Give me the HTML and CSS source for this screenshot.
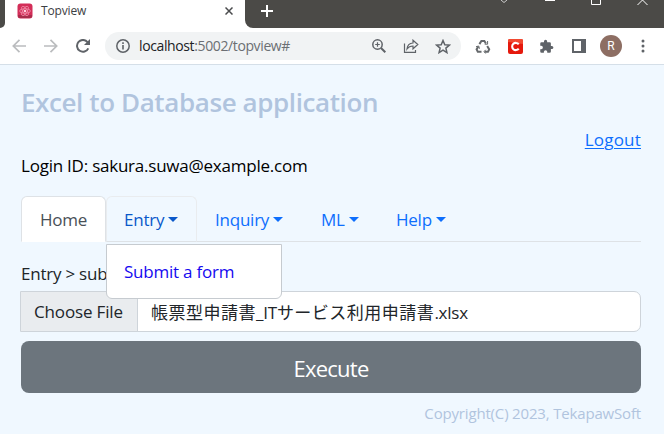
FILE: index.html
```html
<!DOCTYPE html>
<html lang="en">
<head>
<meta charset="utf-8">
<title>Topview</title>
<link rel="stylesheet" href="styles.css">
</head>
<body>
<header class="browser">
  <div class="strip">
    <div class="corner-left"></div>
    <div class="tab">
      <svg class="favicon" width="16" height="16" viewBox="0 0 16 16"><rect x=".5" y=".5" width="15" height="15" rx="3" fill="#d32d58"/><path d="M1 12h14v1q0 2-2 2H3q-2 0-2-2z" fill="#a92c4b"/><g fill="none" stroke="#f08ea8" stroke-width=".8"><ellipse cx="8" cy="8" rx="5.3" ry="2.2"/><ellipse cx="8" cy="8" rx="5.3" ry="2.2" transform="rotate(60 8 8)"/><ellipse cx="8" cy="8" rx="5.3" ry="2.2" transform="rotate(120 8 8)"/></g><circle cx="8" cy="8" r="1.2" fill="#ffd3df"/></svg>
      <span class="tab-title">Topview</span>
      <svg class="close" width="8" height="8" viewBox="0 0 8 8"><path d="M.5.5l7 7M7.5.5l-7 7" stroke="#4a4b4d" stroke-width="1.5"/></svg>
    </div>
    <div class="strip-rest">
      <svg class="plus" width="12" height="12" viewBox="0 0 12 12"><path d="M6 0v12M0 6h12" stroke="#fff" stroke-width="2"/></svg>
      <svg class="window-icons" width="160" height="6" viewBox="0 0 160 6" fill="none" stroke="#fff"><path d="M13 0l3 2.500L19 0" stroke="#ccc"/><path d="M57 .5h10"/><path d="M103.500 0v4.500h9V0"/><path d="M149.500 5l5-5 5 5"/></svg>
    </div>
  </div>
  <div class="toolbar">
    <svg class="arrow" width="14" height="14" viewBox="0 0 14 14" fill="none" stroke="#babcbe" stroke-width="1.700"><path d="M14 7H1M7.500 .8L1.300 7l6.200 6.200"/></svg>
    <svg class="arrow forward" width="14" height="14" viewBox="0 0 14 14" fill="none" stroke="#babcbe" stroke-width="1.700"><path d="M0 7h13M6.500 .8L12.700 7l-6.200 6.200"/></svg>
    <svg class="reload" width="14" height="14" viewBox="0 0 14 14"><path d="M12.300 9.300A5.900 5.900 0 1 1 11.500 3.100" fill="none" stroke="#5f6368" stroke-width="2"/><path d="M14 0v6H8z" fill="#5f6368"/></svg>
    <div class="address">
      <svg class="info" width="14" height="14" viewBox="0 0 14 14"><circle cx="7" cy="7" r="6.200" fill="none" stroke="#5f6368" stroke-width="1.500"/><path d="M7 6v4.500M7 3.300v1.600" stroke="#5f6368" stroke-width="1.600"/></svg>
      <span class="url"><b>localhost</b>:5002/topview#</span>
      <svg width="14" height="14" viewBox="0 0 14 14" fill="none" stroke="#5f6368" stroke-width="1.500"><circle cx="5.500" cy="5.500" r="4.700"/><path d="M9 9l4.300 4.300" stroke-width="2"/><path d="M5.500 3.200v4.600M3.200 5.500h4.600" stroke-width="1.200"/></svg>
      <svg class="share" width="16" height="14" viewBox="0 0 16 14" fill="none" stroke="#5f6368" stroke-width="1.200"><path d="M1.500 4.500v8.900h11V11"/><path d="M4 10c.4-4 2.800-5.800 6-6V1.200l4.800 4.300L10 9.800V7C7.300 7 5.400 8 4 10z"/></svg>
      <svg class="star" width="16" height="15" viewBox="0 0 16 15"><path d="M8 1.500l1.800 4.200 4.600.4-3.500 3 1 4.500L8 11.200l-3.900 2.400 1-4.500-3.500-3 4.600-.4z" fill="none" stroke="#5f6368" stroke-width="1.500"/></svg>
    </div>
    <svg class="recycle" width="16" height="15" viewBox="0 0 16 15" fill="none" stroke="#66696c" stroke-width="2"><path d="M4.400 5.100L6.400 1.900h3l1.500 2.500"/><path d="M12.200 7l2 3.400-1.200 2.300H9.600"/><path d="M6.500 12.700H2.800L1.600 10.400l1.700-2.900"/><path d="M12.600 2v3.200H9.700M10.700 10.800L9 12.700l1.700 1.800M1 7.700l2.700-.7.8 2.700" stroke-width="1"/></svg>
    <svg class="red" width="15" height="15" viewBox="0 0 15 15"><rect width="15" height="15" rx="2" fill="#e5190d"/><path d="M1 0h13q1 0 1 2v3L0 3V1z" fill="#f14a32"/><path d="M10.700 5.400A3.600 3.600 0 1 0 10.700 9.600" fill="none" stroke="#fff" stroke-width="2.100"/></svg>
    <svg class="puzzle" width="15" height="15" viewBox="0 0 24 24"><path fill="#5f6368" d="M20.500 11H19V7a2 2 0 0 0-2-2h-4V3.500a2.500 2.500 0 0 0-5 0V5H4a2 2 0 0 0-2 2v3.800h1.500a2.700 2.700 0 0 1 0 5.400H2V20a2 2 0 0 0 2 2h3.800v-1.500a2.700 2.700 0 0 1 5.400 0V22H17a2 2 0 0 0 2-2v-4h1.500a2.500 2.500 0 0 0 0-5z"/></svg>
    <svg class="panel" width="14" height="14" viewBox="0 0 14 14"><path fill="#5f6368" fill-rule="evenodd" d="M0 0h14v14H0zM2 2v10h7V2z"/></svg>
    <span class="avatar">R</span>
    <svg class="dots" width="4" height="14" viewBox="0 0 4 14" fill="#5f6368"><circle cx="2" cy="2" r="1.500"/><circle cx="2" cy="7" r="1.500"/><circle cx="2" cy="12" r="1.500"/></svg>
  </div>
</header>
<main class="page">
  <h1 class="title">Excel to Database application</h1>
  <div class="logout-row"><a class="logout" href="#">Logout</a></div>
  <div class="login">Login ID: sakura.suwa@example.com</div>
  <nav class="tabs">
    <a class="item active">Home</a>
    <div class="item hover">Entry<i class="caret"></i>
      <div class="menu"><a class="submit">Submit a form</a></div>
    </div>
    <a class="item inquiry">Inquiry<i class="caret"></i></a>
    <a class="item ml">ML<i class="caret"></i></a>
    <a class="item">Help<i class="caret"></i></a>
  </nav>
  <div class="crumbs">Entry &gt; sub</div>
  <div class="file">
    <span class="choose">Choose File</span>
    <span class="name"><span class="cjk">帳票型申請書</span>_IT<span class="cjk">サービス利用申請書</span>.xlsx</span>
  </div>
  <button class="execute">Execute</button>
  <footer class="footer">Copyright(C) 2023, TekapawSoft</footer>
</main>
</body>
</html>
```

FILE: styles.css
```css
* { box-sizing: border-box; }
body {
  margin: 0;
  width: 664px;
  height: 434px;
  overflow: hidden;
  background: #f0f8ff;
  font: 17px/26px "Open Sans", "Noto Sans CJK JP", sans-serif;
  letter-spacing: -0.23px;
  color: #212529;
}
svg { display: block; flex: none; }

.browser { height: 65px; background: #fff; border-bottom: 1px solid #d5dfe8; }
.strip { display: flex; height: 28px; background: #fff; }
.corner-left { width: 5px; background: #4b4a47; border-bottom-right-radius: 5px; }
.tab { display: flex; width: 240px; padding: 3px 12px 0 12px; }
.tab-title { margin-left: 8px; font-size: 12px; line-height: 16px; letter-spacing: -0.15px; color: #3c4043; }
.close { margin: 4px 0 0 auto; }
.strip-rest { flex: 1; display: flex; justify-content: space-between; padding: 0 16px; background: #4b4a47; border-bottom-left-radius: 8px; }
.plus { margin-top: 5px; }
.toolbar { display: flex; align-items: center; height: 36px; padding-left: 12px; }
.forward { margin-left: 18px; }
.reload { margin-left: 18px; }
.address { display: flex; align-items: center; margin-left: 15px; width: 356px; height: 28px; padding: 0 10px 0 11px; border-radius: 14px; background: #f1f3f4; }
.url { margin: 0 auto 0 9px; font-size: 14px; letter-spacing: -0.38px; color: #6b6f73; }
.url b { font-weight: 400; color: #202124; }
.share { margin-left: 17px; }
.star { margin-left: 16px; }
.recycle { margin-left: 14px; }
.red { margin-left: 17px; }
.puzzle { margin-left: 16px; }
.panel { margin-left: 18px; }
.avatar { width: 22px; height: 22px; margin-left: 14px; border-radius: 50%; background: #8d6e63; color: #fff; font: 12px/22px Roboto, sans-serif; letter-spacing: 0; text-align: center; }
.dots { margin-left: 19px; }

.page { padding: 19px 23px 0 21px; }
.title { margin: 0; font-size: 26px; line-height: 36px; font-weight: 600; letter-spacing: -0.4px; color: #b0c4de; }
.logout-row { margin-top: 7px; text-align: right; }
.logout { color: #0d6efd; letter-spacing: 0.2px; text-underline-offset: 2px; text-decoration-thickness: 1px; }
.login { color: #000; }
.tabs { display: flex; height: 46px; margin-top: 17px; border-bottom: 1px solid #dee2e6; color: #0d6efd; }
.item { position: relative; display: flex; align-items: center; height: 46px; padding: 1px 17px 0; border: 1px solid transparent; border-radius: 6px 6px 0 0; }
.active { width: 85px; padding-left: 18px; background: #fff; border-color: #dee2e6 #dee2e6 #fff; color: #495057; }
.hover { width: 91px; border-color: #e9ecef #e9ecef #dee2e6; color: #0a58ca; }
.inquiry { width: 106px; }
.ml { width: 75px; }
.caret { margin-left: 4px; border: 5px solid transparent; border-top-color: currentColor; border-bottom: 0; }
.menu { position: absolute; left: -1px; top: 47px; width: 176px; height: 55px; padding: 14px 17px; background: #fff; border: 1px solid #c6cbd0; border-radius: 0 0 6px 6px; }
.submit { color: #1509f0; }
.crumbs { margin-top: 19px; }
.file { display: flex; height: 41px; margin: 4px 0 0 -1px; background: #fff; border: 1px solid #ced4da; border-radius: 0 7px 7px 0; line-height: 39px; }
.choose { width: 117px; padding-left: 13px; background: #e9ecef; border-right: 1px solid #ced4da; letter-spacing: -0.15px; }
.name { padding-left: 13px; white-space: nowrap; }
.cjk { font-family: "Noto Sans CJK JP", sans-serif; letter-spacing: 0.5px; }
.execute { display: block; width: 100%; height: 52px; margin-top: 9px; border: 0; border-radius: 8px; background: #6c757d; color: #fff; font: 22px/52px "Open Sans", sans-serif; letter-spacing: -0.75px; }
.footer { margin-top: 7px; text-align: right; font-size: 15px; letter-spacing: -0.17px; color: #b0c4de; }
```
